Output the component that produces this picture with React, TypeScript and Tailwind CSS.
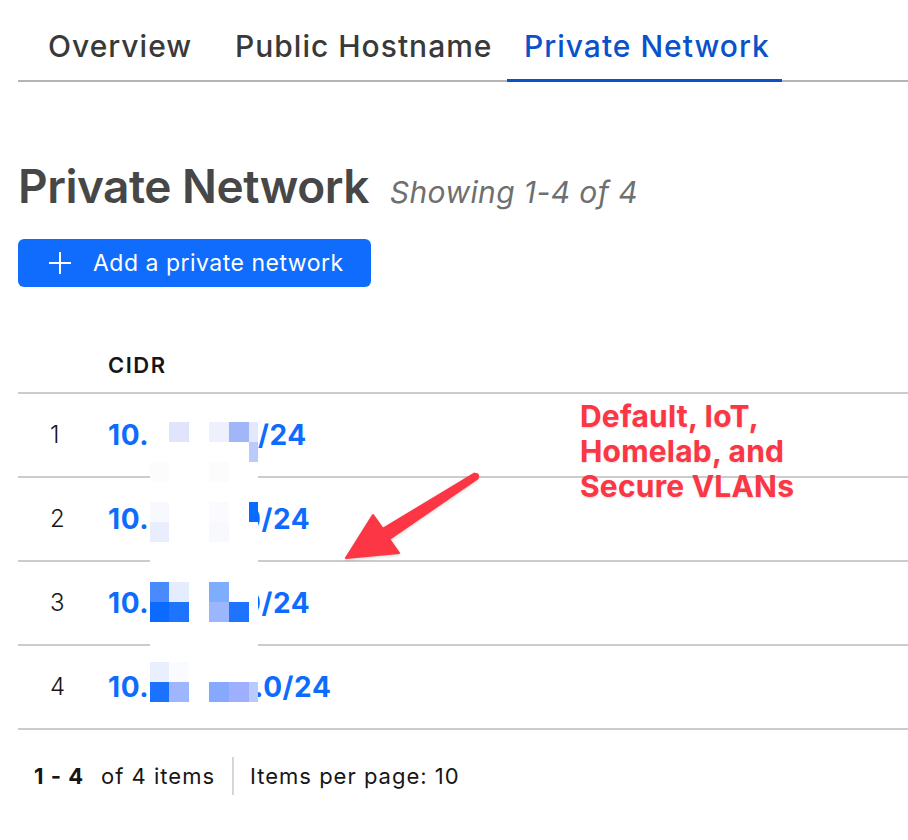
import React from "react";

const W = "#ffffff";

// redaction mosaic over the middle octets, 6 cols x 14 rows of 20px cells
const mosaicCols = [19, 20, 20, 20, 20, 9];
const mosaic: string[][] = [
  [W, "#e0e5fb", W, "#eef1fd", "#a0b6f8", "#e3e9fd"],
  [W, W, W, W, W, "#b8cbfb"],
  ["#fcfcfc", W, W, "#fcfcfc", W, W],
  [W, W, W, W, W, W],
  ["#f8f9ff", W, W, "#fbfbff", W, "#0a6cff"],
  ["#e9edfd", W, W, "#f8f9fe", W, W],
  [W, W, W, W, W, W],
  [W, W, W, W, W, W],
  ["#4a8aff", "#e5ecfd", W, "#7fadfe", W, W],
  ["#0b6bff", "#1c74ff", W, "#9bb6fd", "#1f74ff", W],
  [W, W, W, W, W, W],
  [W, W, W, W, W, W],
  ["#e9effd", "#fafbff", W, W, W, W],
  ["#1a72ff", "#9db6fd", W, "#84a9fd", "#9eb0fd", "#b9cbfc"],
];

// head width decides where the visible tail starts (hidden part sits under the mosaic)
const rows = [
  { n: 1, tail: "/24", head: "w-[150px]" },
  { n: 2, tail: "0/24", head: "w-[134px]" },
  { n: 3, tail: "0/24", head: "w-[134px]" },
  { n: 4, tail: ".0/24", head: "w-[146px]" },
];

const tabs = [
  { label: "Overview", w: "w-[187px]", active: false },
  { label: "Public Hostname", w: "w-[289px]", active: false },
  { label: "Private Network", w: "w-[275px]", active: true },
];

const App = () => {
  return (
    <div
      className="relative w-[908px] h-[840px] overflow-hidden bg-white pl-[18px]"
      style={{ fontFamily: "Inter, 'Noto Sans', sans-serif" }}
    >
      {/* tabs */}
      <div className="flex h-[82px] border-b-2 border-[#b5b5b5] pl-[13px]">
        {tabs.map((t) => (
          <div
            key={t.label}
            className={`${t.w} h-[82px] shrink-0 pl-[17px] pt-[28px] text-[30px] leading-[36px] font-medium tracking-[1px] ${
              t.active
                ? "border-b-[3px] border-[#0a52c9] text-[#0a52c9]"
                : "text-[#393939]"
            }`}
          >
            {t.label}
          </div>
        ))}
      </div>

      {/* heading */}
      <div className="mt-[76px] flex items-baseline">
        <h1 className="text-[46px] leading-[56px] font-semibold text-[#474747] tracking-[-0.5px]">
          Private Network
        </h1>
        <span className="ml-[21px] text-[30px] italic tracking-[0.4px] text-[#6f6f6f]">
          Showing 1-4 of 4
        </span>
      </div>

      <button className="mt-[24px] flex h-[48px] w-[353px] items-center rounded-[6px] bg-[#0f6cfd] pl-[30px] text-[23px] tracking-[0.5px] text-white">
        <svg width="24" height="24" viewBox="0 0 24 24" fill="none">
          <path d="M12 1v22M1 12h22" stroke="white" strokeWidth="2" />
        </svg>
        <span className="ml-[21px]">Add a private network</span>
      </button>

      {/* table */}
      <div className="mt-[51px]">
        <div className="flex h-[56px] items-center border-b-2 border-[#cccccc] pl-[90px] text-[22px] font-semibold tracking-[1.5px] text-[#161616]">
          CIDR
        </div>
        {rows.map((r) => (
          <div
            key={r.n}
            className="flex h-[84px] items-center border-b-2 border-[#cccccc]"
          >
            <div className="w-[90px] pl-[32px] text-[24px] font-light text-[#161616]">
              {r.n}
            </div>
            <div className="flex items-center whitespace-nowrap text-[28px] font-bold tracking-[0.6px] text-[#0d6cfd]">
              <span className={r.head}>10.</span>
              <span>{r.tail}</span>
            </div>
          </div>
        ))}
      </div>

      {/* pagination */}
      <div className="flex h-[92px] items-center text-[22px] tracking-[1px] text-[#161616]">
        <span className="pl-[16px] font-bold">1 - 4</span>
        <span className="ml-[17px]">of 4 items</span>
        <div className="ml-[17px] h-[38px] w-[2px] bg-[#d6d6d6]" />
        <span className="ml-[16px]">Items per page: 10</span>
      </div>

      {/* mosaic redaction */}
      <div className="absolute left-[150px] top-[422px] flex flex-col">
        {mosaic.map((row, i) => (
          <div key={i} className="flex">
            {row.map((c, j) => (
              <div
                key={j}
                className="h-[20px]"
                style={{ width: mosaicCols[j], background: c }}
              />
            ))}
          </div>
        ))}
      </div>

      {/* annotation */}
      <div
        className="absolute left-[580px] top-[399px] text-[30px] leading-[35px] font-bold tracking-[0.2px] text-[#fc3644]"
        style={{ textShadow: "0 1px 2px rgba(0,0,0,0.15)" }}
      >
        Default, IoT,
        <br />
        Homelab, and
        <br />
        Secure VLANs
      </div>
      <svg
        className="pointer-events-none absolute left-0 top-0"
        width="908"
        height="840"
        style={{ filter: "drop-shadow(0 1px 1.5px rgba(0,0,0,0.2))" }}
      >
        <polygon
          points="477.6,478.5 389.2,539.1 399,553 346,558 373,515 382.8,528.9 474.4,473.5"
          fill="#fc3644"
          stroke="#fc3644"
          strokeWidth="2"
          strokeLinejoin="round"
        />
        <circle cx="476" cy="476" r="3" fill="#fc3644" />
      </svg>
    </div>
  );
};

export default App;
